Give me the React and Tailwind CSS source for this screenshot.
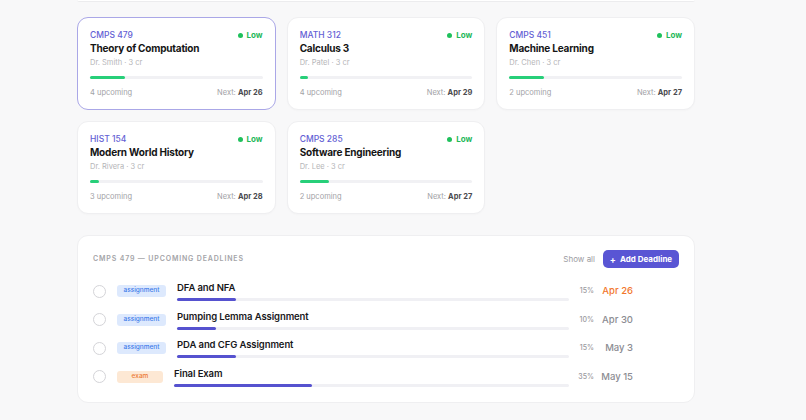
const COURSES = [
  { code: 'CMPS 479', title: 'Theory of Computation', prof: 'Dr. Smith', upcoming: 4, next: 'Apr 26', pct: 20, active: true },
  { code: 'MATH 312', title: 'Calculus 3', prof: 'Dr. Patel', upcoming: 4, next: 'Apr 29', pct: 5 },
  { code: 'CMPS 451', title: 'Machine Learning', prof: 'Dr. Chen', upcoming: 2, next: 'Apr 27', pct: 20 },
  { code: 'HIST 154', title: 'Modern World History', prof: 'Dr. Rivera', upcoming: 3, next: 'Apr 28', pct: 5 },
  { code: 'CMPS 285', title: 'Software Engineering', prof: 'Dr. Lee', upcoming: 2, next: 'Apr 27', pct: 17 },
];

const DEADLINES = [
  { type: 'assignment', title: 'DFA and NFA', weight: 15, date: 'Apr 26', soon: true },
  { type: 'assignment', title: 'Pumping Lemma Assignment', weight: 10, date: 'Apr 30' },
  { type: 'assignment', title: 'PDA and CFG Assignment', weight: 15, date: 'May 3' },
  { type: 'exam', title: 'Final Exam', weight: 35, date: 'May 15' },
];

const TYPE_BADGE = {
  assignment: 'bg-[#dde9fd] text-[#3d7bea] w-[49px]',
  exam: 'bg-[#fde8d4] text-[#ec7a35] w-[46px]',
};

function CourseCard({ c }) {
  return (
    <div
      className={`rounded-[11px] bg-white px-[12px] pt-[11px] pb-[10px] ${
        c.active ? 'border-[1.5px] border-[#aaa7e7]' : 'border border-[#efeff1] shadow-[0_1px_2px_rgba(0,0,0,0.02)]'
      }`}
    >
      <div className="flex items-center justify-between">
        <span className="text-[8.5px] leading-[12px] font-medium text-[#6360d4]">{c.code}</span>
        <span className="flex items-center gap-[4px] text-[8px] leading-[12px] font-bold text-[#1fb85a]">
          <span className="h-[5px] w-[5px] rounded-full bg-[#1fc15c]" />
          Low
        </span>
      </div>
      <div className="text-[10px] leading-[14px] font-bold text-[#151515] tracking-[-0.02em]">{c.title}</div>
      <div className="mt-[2px] text-[7.5px] leading-[12px] text-[#b5b5b8]">{c.prof} · 3 cr</div>
      <div className="mt-[7px] h-[3px] rounded-full bg-[#f1f1f4]">
        <div className="h-full rounded-full bg-[#27cf79]" style={{ width: `${c.pct}%` }} />
      </div>
      <div className="mt-[8px] flex items-center justify-between text-[7.5px] leading-[12px]">
        <span className="text-[#a2a2a6]">{c.upcoming} upcoming</span>
        <span className="text-[#a2a2a6]">
          Next: <span className="font-bold text-[#4a4a4e]">{c.next}</span>
        </span>
      </div>
    </div>
  );
}

function DeadlineRow({ d }) {
  return (
    <div className="flex h-[28.5px] items-center">
      <span className="h-[13px] w-[13px] shrink-0 rounded-full border-[1.5px] border-[#d4d4d8] bg-white" />
      <span
        className={`ml-[11px] flex h-[12px] shrink-0 items-center justify-center rounded-[3px] text-[6.5px] font-medium ${TYPE_BADGE[d.type]}`}
      >
        {d.type}
      </span>
      <div className="ml-[11px] min-w-0 flex-1">
        <div className="text-[9.5px] leading-[13px] font-semibold tracking-[-0.01em] text-[#18181b]">{d.title}</div>
        <div className="mt-[4px] h-[3px] rounded-full bg-[#f0f0f4]">
          <div className="h-full rounded-full bg-[#5652cf]" style={{ width: `${d.weight}%` }} />
        </div>
      </div>
      <span className="w-[25px] shrink-0 text-right text-[7px] font-medium text-[#9a9aa0]">{d.weight}%</span>
      <span
        className={`w-[39px] shrink-0 text-right text-[9.5px] font-medium ${
          d.soon ? 'text-[#f2772d]' : 'text-[#8c8c92]'
        }`}
      >
        {d.date}
      </span>
      <span className="w-[46px] shrink-0" />
    </div>
  );
}

export default function App() {
  return (
    <div className="min-h-[420px] w-[806px] bg-[#f8f8f9] font-['Inter','Liberation_Sans',sans-serif]">
      <div className="ml-[77px] w-[618px]">
        {/* bottom edge of the panel above */}
        <div className="h-[2px] rounded-b-[10px] border-b border-[#ececee] bg-white" />

        {/* Course cards */}
        <div className="mt-[15px] grid grid-cols-3 gap-x-[11px] gap-y-[11px]">
          {COURSES.map((c) => (
            <CourseCard key={c.code} c={c} />
          ))}
        </div>

        {/* Deadlines */}
        <div className="mt-[21px] rounded-[11px] border border-[#efeff1] bg-white px-[15px] pt-[14px] pb-[11px]">
          <div className="flex h-[18px] items-center justify-between">
            <span className="text-[7px] font-semibold uppercase tracking-[0.12em] text-[#a4a4a8]">
              CMPS 479 — Upcoming deadlines
            </span>
            <div className="flex items-center gap-[8px]">
              <span className="text-[8px] text-[#9c9ca2]">Show all</span>
              <button className="flex h-[18px] w-[76px] items-center justify-center gap-[4px] rounded-[5px] bg-[#5955d4] text-[8px] font-bold text-white">
                <span className="text-[9px] leading-none">+</span> Add Deadline
              </button>
            </div>
          </div>
          <div className="mt-[9px]">
            {DEADLINES.map((d) => (
              <DeadlineRow key={d.title} d={d} />
            ))}
          </div>
        </div>
      </div>
    </div>
  );
}
